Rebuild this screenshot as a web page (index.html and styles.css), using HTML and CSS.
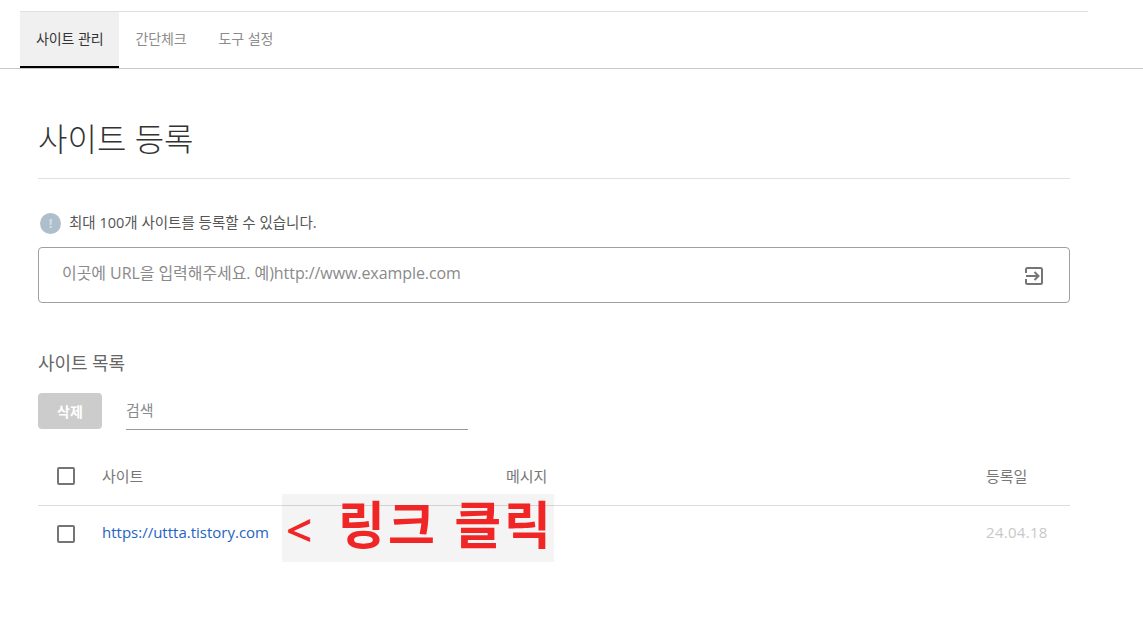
FILE: index.html
```html
<!DOCTYPE html>
<html lang="ko">
<head>
    <meta charset="UTF-8">
    <meta name="viewport" content="width=device-width, initial-scale=1.0">
    <title>사이트 관리</title>
    <link rel="stylesheet" href="styles.css">
</head>
<body>
    <div class="top-rule"></div>
    <nav class="tabs">
        <a class="tab active">사이트 관리</a>
        <a class="tab">간단체크</a>
        <a class="tab">도구 설정</a>
    </nav>

    <main class="content">
        <h1 class="page-title">사이트 등록</h1>

        <div class="notice">
            <span class="notice-icon">!</span>
            <span class="notice-text">최대 100개 사이트를 등록할 수 있습니다.</span>
        </div>

        <div class="url-box">
            <span class="url-placeholder">이곳에 URL을 입력해주세요. 예)http://www.example.com</span>
            <svg class="url-icon" width="20" height="20" viewBox="0 0 20 20" fill="none" stroke="#757575" stroke-width="2">
                <path d="M2 7V3.500A1.500 1.500 0 0 1 3.500 2H16.500A1.500 1.500 0 0 1 18 3.500V16.500A1.500 1.500 0 0 1 16.500 18H3.500A1.500 1.500 0 0 1 2 16.500V13"/>
                <path d="M2 10H14M10.500 6L14.500 10L10.500 14"/>
            </svg>
        </div>

        <h2 class="list-title">사이트 목록</h2>

        <div class="toolbar">
            <button class="delete-btn">삭제</button>
            <div class="search">검색</div>
        </div>

        <div class="list">
            <div class="row head">
                <span class="check"></span>
                <span class="col-site">사이트</span>
                <span class="col-msg">메시지</span>
                <span class="col-date">등록일</span>
            </div>
            <div class="row body">
                <span class="check"></span>
                <a class="col-site link">https://uttta.tistory.com</a>
                <span class="col-msg"></span>
                <span class="col-date date">24.04.18</span>
            </div>
            <div class="note"><span class="note-arrow">&lt;</span><span>링크 클릭</span></div>
        </div>
    </main>
</body>
</html>
```

FILE: styles.css
```css
* {
    box-sizing: border-box;
}
body {
    margin: 0;
    background: #fff;
    color: #333;
    font-family: "Open Sans", "Noto Sans CJK KR", sans-serif;
}
.top-rule {
    height: 1px;
    margin: 11px 55px 0 20px;
    background: #e0e0e0;
}
.tabs {
    display: flex;
    height: 57px;
    padding-left: 20px;
    border-bottom: 1px solid #c8c8c8;
}
.tab {
    height: 56px;
    padding: 0 16px;
    line-height: 53px;
    font-size: 14px;
    letter-spacing: -0.1px;
    color: #8c8c8c;
}
.tab.active {
    background: #f0f0f0;
    color: #333;
    border-bottom: 2px solid #000;
}
.content {
    width: 1032px;
    margin-left: 38px;
}
.page-title {
    margin: 0;
    height: 110px;
    padding-top: 46px;
    border-bottom: 1px solid #e0e0e0;
    font-size: 32px;
    line-height: 48px;
    font-weight: 300;
    color: #333;
}
.notice {
    display: flex;
    align-items: center;
    gap: 8px;
    margin-top: 34px;
    height: 21px;
    padding-left: 2px;
    font-size: 14.500px;
    color: #555;
}
.notice-text {
    margin-bottom: 4px;
}
.notice-icon {
    width: 21px;
    height: 21px;
    border-radius: 50%;
    background: #aebfcb;
    color: #d5dfe5;
    font-size: 13px;
    font-weight: 700;
    line-height: 21px;
    text-align: center;
}
.url-box {
    display: flex;
    align-items: center;
    justify-content: space-between;
    height: 56px;
    margin-top: 13px;
    padding: 0 25px 0 23px;
    border: 1px solid #a0a0a0;
    border-radius: 4px;
}
.url-placeholder {
    margin-bottom: 6px;
    font-size: 16px;
    letter-spacing: -0.07px;
    color: #8a8a8a;
}
.url-icon {
    display: block;
    margin-top: 2px;
}
.list-title {
    margin: 48px 0 0;
    font-size: 18px;
    line-height: 24px;
    font-weight: 400;
    letter-spacing: -0.1px;
    color: #666;
}
.toolbar {
    display: flex;
    align-items: flex-start;
    gap: 24px;
    margin-top: 18px;
}
.delete-btn {
    width: 64px;
    height: 36px;
    border: none;
    border-radius: 4px;
    background: #cccccc;
    color: #fff;
    font-family: inherit;
    font-size: 14px;
    font-weight: 700;
    padding: 0;
}
.search {
    width: 342px;
    height: 37px;
    border-bottom: 1px solid #999;
    font-size: 15px;
    line-height: 35px;
    color: #8a8a8a;
}
.list {
    position: relative;
    margin-top: 18px;
}
.row {
    display: flex;
    align-items: center;
    padding-left: 19px;
    font-size: 15px;
}
.row.head {
    height: 58px;
    padding-bottom: 1px;
    border-bottom: 1px solid #dcdcdc;
    color: #777;
}
.row.head .col-site,
.row.head .col-msg,
.row.head .col-date {
    margin-bottom: 2px;
}
.row.body {
    height: 56px;
}
.check {
    width: 18px;
    height: 18px;
    border: 2px solid #757575;
    border-radius: 2px;
}
.col-site {
    width: 404px;
    margin-left: 27px;
}
.col-msg {
    flex: 1;
}
.col-date {
    width: 84px;
}
.link {
    margin-bottom: 5px;
    color: #1f63c4;
}
.date {
    margin-bottom: 5px;
    letter-spacing: 0.3px;
    color: #c8c8c8;
}
.note {
    position: absolute;
    left: 244px;
    top: 46px;
    display: flex;
    width: 272px;
    height: 70px;
    padding-left: 4px;
    background: rgba(0, 0, 0, 0.045);
    color: #f02525;
    font-size: 51px;
    font-weight: 700;
    line-height: 60px;
    letter-spacing: 3px;
    white-space: pre;
}
.note-arrow {
    width: 54px;
    margin-top: 5px;
    font-size: 46px;
    font-weight: 600;
}
```
